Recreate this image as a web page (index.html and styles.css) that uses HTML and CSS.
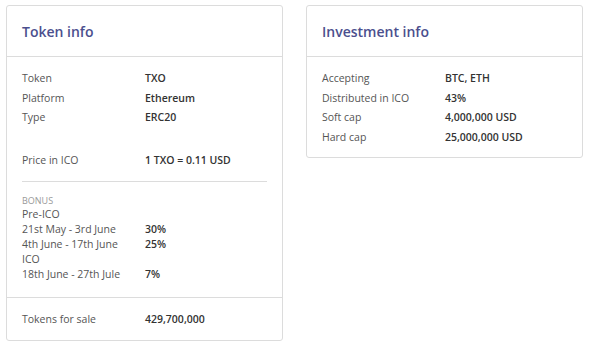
FILE: index.html
```html
<!DOCTYPE html>
<html>
<head>
<meta charset="utf-8">
<link rel="stylesheet" href="styles.css">
</head>
<body>
<div class="cards">
  <section class="card">
    <h2 class="card-title">Token info</h2>
    <div class="card-body">
      <div class="rows">
        <div class="row"><span class="label">Token</span><span class="value">TXO</span></div>
        <div class="row"><span class="label">Platform</span><span class="value">Ethereum</span></div>
        <div class="row"><span class="label">Type</span><span class="value">ERC20</span></div>
      </div>
      <div class="rows price">
        <div class="row"><span class="label">Price in ICO</span><span class="value">1 TXO = 0.11 USD</span></div>
      </div>
      <div class="bonus">
        <div class="bonus-title">BONUS</div>
        <div class="brow"><span class="label">Pre-ICO</span></div>
        <div class="brow"><span class="label">21st May - 3rd June</span><span class="value">30%</span></div>
        <div class="brow"><span class="label">4th June - 17th June</span><span class="value">25%</span></div>
        <div class="brow"><span class="label">ICO</span></div>
        <div class="brow"><span class="label">18th June - 27th Jule</span><span class="value">7%</span></div>
      </div>
    </div>
    <div class="card-foot">
      <div class="row"><span class="label">Tokens for sale</span><span class="value">429,700,000</span></div>
    </div>
  </section>
  <section class="card">
    <h2 class="card-title">Investment info</h2>
    <div class="card-body short">
      <div class="rows">
        <div class="row"><span class="label">Accepting</span><span class="value">BTC, ETH</span></div>
        <div class="row"><span class="label">Distributed in ICO</span><span class="value">43%</span></div>
        <div class="row"><span class="label">Soft cap</span><span class="value">4,000,000 USD</span></div>
        <div class="row"><span class="label">Hard cap</span><span class="value">25,000,000 USD</span></div>
      </div>
    </div>
  </section>
</div>
</body>
</html>
```
FILE: styles.css
```css
* { box-sizing: border-box; }
html, body { background: #fff; }
body {
  margin: 0;
  padding: 5px 0 0 6px;
  font-family: "Open Sans", "Liberation Sans", sans-serif;
  font-size: 10.5px;
  color: #555;
}
.cards {
  display: flex;
  gap: 23px;
  align-items: flex-start;
}
.card {
  width: 277px;
  border: 1px solid #dcdcdc;
  border-radius: 3px;
  background: #fff;
}
.card-title {
  margin: 0;
  height: 51px;
  padding: 0 15px;
  display: flex;
  align-items: center;
  font-size: 14px;
  font-weight: 600;
  color: #4b4f8e;
  border-bottom: 1px solid #dcdcdc;
}
.card-body {
  padding: 12px 15px 15px;
}
.card-body.short {
  padding-bottom: 10px;
}
.row, .brow {
  display: grid;
  grid-template-columns: 123px 1fr;
  line-height: 19.5px;
}
.brow { line-height: 15px; }
.label { color: #555; }
.value { font-weight: 600; color: #333; }
.price {
  margin-top: 23px;
  padding-bottom: 11px;
  border-bottom: 1px solid #dcdcdc;
}
.bonus { padding-top: 12px; }
.bonus-title {
  font-size: 9px;
  line-height: 13px;
  color: #999;
}
.card-foot {
  border-top: 1px solid #dcdcdc;
  padding: 11px 15px 11px;
}
.card-foot .row { line-height: 20px; }
```
